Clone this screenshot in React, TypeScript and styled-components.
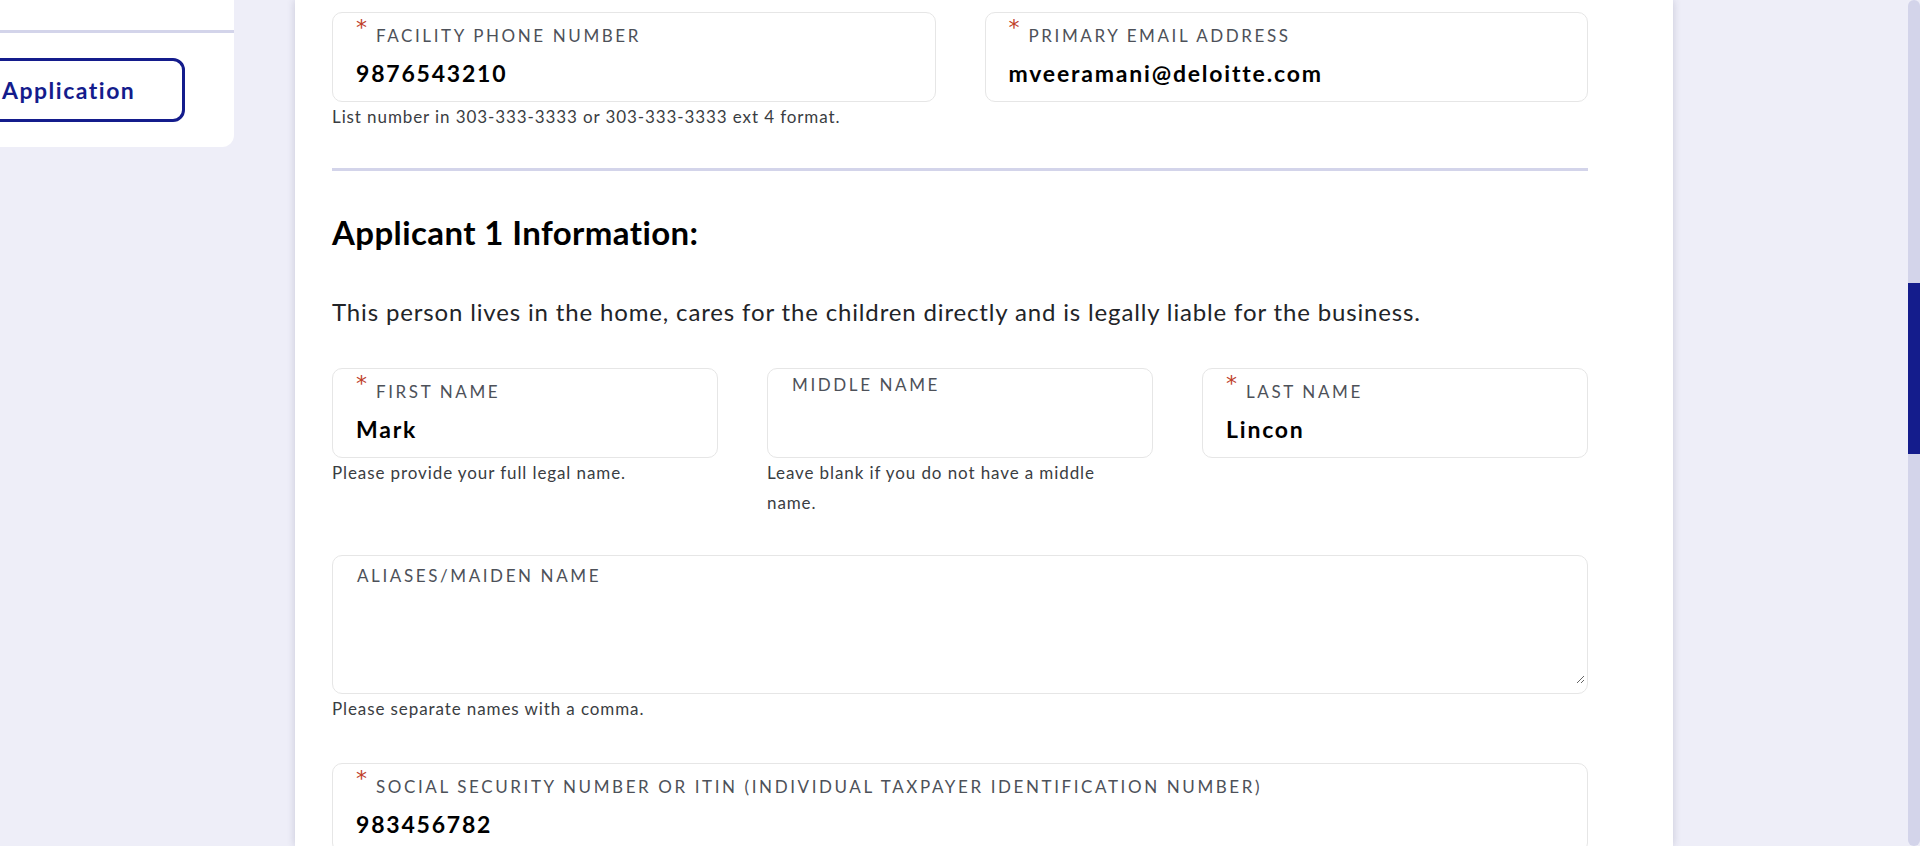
import React from "react";
import styled, { createGlobalStyle } from "styled-components";

const GlobalStyle = createGlobalStyle`
  html, body { margin: 0; padding: 0; height: 100%; overflow: hidden; background: #eeeef8; }
  body { font-family: Lato, "Open Sans", sans-serif; }
  *, *::before, *::after { box-sizing: border-box; }
`;

const Page = styled.div`
  display: flex;
  align-items: flex-start;
  width: 1920px;
  height: 846px;
  overflow: hidden;
  background: #eeeef8;
`;

const Sidebar = styled.aside`
  flex: none;
  width: 234px;
  background: #ffffff;
  border-bottom-right-radius: 12px;
  overflow: hidden;
`;

const SidebarTop = styled.div`
  height: 30px;
`;

const SidebarDivider = styled.hr`
  margin: 0;
  border: none;
  height: 3px;
  background: #d3d4ea;
`;

const SidebarBody = styled.div`
  padding: 25px 0 25px;
`;

const ActionButton = styled.button`
  display: block;
  margin-left: -60px;
  width: 245px;
  height: 64px;
  padding: 0 0 0 59px;
  text-align: left;
  border: 3px solid #141c8c;
  border-radius: 12px;
  background: #ffffff;
  color: #141c8c;
  font-family: Lato, sans-serif;
  font-weight: 700;
  font-size: 23px;
  letter-spacing: 1.5px;
`;

const Panel = styled.main`
  flex: none;
  margin-left: 61px;
  width: 1378px;
  height: 846px;
  background: #ffffff;
  box-shadow: 0 0 8px rgba(50, 50, 90, 0.2);
  padding: 12px 85px 0 37px;
  overflow: hidden;
`;

const Spacer = styled.div`
  flex: 1;
`;

const ScrollTrack = styled.div`
  flex: none;
  width: 12px;
  height: 846px;
  background: #d3d4ea;
  border-radius: 6px;
  overflow: hidden;
  display: flex;
  flex-direction: column;
`;

const ScrollThumb = styled.div`
  margin-top: 283px;
  height: 171px;
  background: #141c8c;
`;

const Row = styled.div<{ $cols: number; $mb?: number }>`
  display: grid;
  grid-template-columns: repeat(${(p) => p.$cols}, 1fr);
  column-gap: 49px;
  align-items: start;
  margin-bottom: ${(p) => p.$mb ?? 0}px;
`;

const FieldGroup = styled.div`
  display: flex;
  flex-direction: column;
  min-width: 0;
`;

const FieldBox = styled.div`
  display: flex;
  flex-direction: column;
  height: 90px;
  padding: 7px 23px 0;
  border: 1px solid #e6e6e6;
  border-radius: 10px;
  background: #ffffff;
`;

const AreaBox = styled.div`
  display: flex;
  flex-direction: column;
  height: 139px;
  padding-top: 7px;
  border: 1px solid #e6e6e6;
  border-radius: 10px;
  background: #ffffff;
`;

const LabelRow = styled.label<{ $pad?: boolean }>`
  display: flex;
  align-items: flex-start;
  height: 25px;
  flex: none;
  padding-left: ${(p) => (p.$pad ? 23 : 0)}px;
`;

const Asterisk = styled.span`
  margin-top: 1px;
  color: #c0402a;
  font-family: "DejaVu Sans", sans-serif;
  font-size: 22px;
  line-height: 14px;
  height: 14px;
`;

const LabelText = styled.span<{ $offset: number; $gap?: number }>`
  margin-top: ${(p) => p.$offset}px;
  margin-left: ${(p) => p.$gap ?? 1}px;
  font-size: 17px;
  line-height: 20px;
  letter-spacing: 2.6px;
  text-transform: uppercase;
  color: #4d5159;
  white-space: nowrap;
`;

const ValueInput = styled.input`
  margin-top: 14px;
  height: 28px;
  padding: 0;
  border: none;
  outline: none;
  background: transparent;
  font-family: Lato, sans-serif;
  font-weight: 700;
  font-size: 23px;
  line-height: 28px;
  letter-spacing: 1.8px;
  color: #000000;
`;

const AreaInput = styled.textarea`
  flex: 1;
  margin: 0 2px 9px 0;
  padding: 4px 23px 0;
  border: none;
  outline: none;
  background: transparent;
  resize: vertical;
  font-family: Lato, sans-serif;
  font-size: 20px;
  color: #000000;
`;

const Hint = styled.p<{ $mb?: number }>`
  margin: 0 0 ${(p) => p.$mb ?? 0}px;
  padding-right: 20px;
  font-size: 17px;
  line-height: 30px;
  letter-spacing: 0.9px;
  color: #3a3d42;
`;

const Divider = styled.hr`
  margin: 36px 0 0;
  border: none;
  height: 3px;
  background: #d3d4ea;
`;

const Heading = styled.h2`
  margin: 42px 0 0;
  font-size: 33px;
  line-height: 38px;
  font-weight: 700;
  letter-spacing: 0.4px;
  color: #000000;
`;

const Lead = styled.p`
  margin: 46px 0 41px;
  font-size: 24px;
  line-height: 30px;
  letter-spacing: 0.85px;
  color: #222428;
`;

type FieldProps = {
  label: string;
  value?: string;
  required?: boolean;
};

function Field({ label, value = "", required }: FieldProps) {
  return (
    <FieldBox>
      <LabelRow>
        {required && <Asterisk>*</Asterisk>}
        <LabelText $offset={required ? 6 : -1} $gap={required ? 9 : 1}>
          {label}
        </LabelText>
      </LabelRow>
      <ValueInput readOnly value={value} aria-label={label} />
    </FieldBox>
  );
}

export default function App() {
  return (
    <>
      <GlobalStyle />
      <Page>
        <Sidebar>
          <SidebarTop />
          <SidebarDivider />
          <SidebarBody>
            <ActionButton>Application</ActionButton>
          </SidebarBody>
        </Sidebar>

        <Panel>
          <Row $cols={2}>
            <FieldGroup>
              <Field required label="Facility Phone Number" value="9876543210" />
              <Hint>List number in 303-333-3333 or 303-333-3333 ext 4 format.</Hint>
            </FieldGroup>
            <FieldGroup>
              <Field required label="Primary Email Address" value="mveeramani@deloitte.com" />
            </FieldGroup>
          </Row>

          <Divider />
          <Heading>Applicant 1 Information:</Heading>
          <Lead>
            This person lives in the home, cares for the children directly and is legally liable for the business.
          </Lead>

          <Row $cols={3} $mb={37}>
            <FieldGroup>
              <Field required label="First Name" value="Mark" />
              <Hint>Please provide your full legal name.</Hint>
            </FieldGroup>
            <FieldGroup>
              <Field label="Middle Name" />
              <Hint>Leave blank if you do not have a middle name.</Hint>
            </FieldGroup>
            <FieldGroup>
              <Field required label="Last Name" value="Lincon" />
            </FieldGroup>
          </Row>

          <FieldGroup>
            <AreaBox>
              <LabelRow $pad>
                <LabelText $offset={3}>Aliases/Maiden Name</LabelText>
              </LabelRow>
              <AreaInput aria-label="Aliases/Maiden Name" />
            </AreaBox>
            <Hint $mb={39}>Please separate names with a comma.</Hint>
          </FieldGroup>

          <Field
            required
            label="Social Security Number or ITIN (Individual Taxpayer Identification Number)"
            value="983456782"
          />
        </Panel>

        <Spacer />
        <ScrollTrack>
          <ScrollThumb />
        </ScrollTrack>
      </Page>
    </>
  );
}
